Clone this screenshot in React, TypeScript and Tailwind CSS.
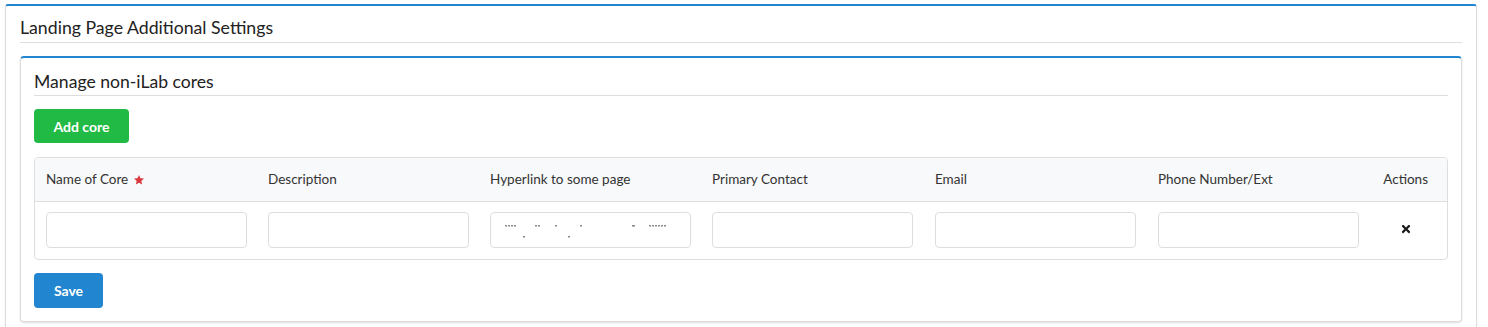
import { FaTimes } from "react-icons/fa";

const columns = [
  { label: "Name of Core", w: "w-[222px]" },
  { label: "Description", w: "w-[222px]" },
  { label: "Hyperlink to some page", w: "w-[222px]" },
  { label: "Primary Contact", w: "w-[223px]" },
  { label: "Email", w: "w-[223px]" },
  { label: "Phone Number/Ext", w: "w-[223px]" },
];

function Star() {
  return (
    <svg viewBox="0 0 24 24" className="ml-[5px] inline-block h-[12px] w-[12px] -translate-y-[1px] fill-[#d9363e]">
      <path d="M12 2l2.9 6.6 7.1.6-5.4 4.7 1.6 7.1L12 17.3 5.8 21l1.6-7.1L2 9.2l7.1-.6z" />
    </svg>
  );
}

// url in the field is scrolled so only a sliver of its letters shows
const sliverTop = [0, 3, 6, 9, 30, 33, 50, 75, 127, 128, 144, 147, 150, 153, 156, 159];
const sliverBottom = [18, 63];

function BlurredLink() {
  return (
    <div className="h-[36px] w-[201px] rounded-[4px] border border-[#dedede] bg-white">
      <svg width="199" height="34" className="block">
        {sliverTop.map((x) => (
          <rect key={x} x={14 + x} y={12} width={2} height={1.5} fill="#8a8a8a" />
        ))}
        {sliverBottom.map((x) => (
          <rect key={x} x={14 + x} y={23} width={2} height={1.5} fill="#8a8a8a" />
        ))}
      </svg>
    </div>
  );
}

export default function App() {
  return (
    <div className="min-h-[327px] w-full bg-white pt-[4px] pl-[5px] pr-[11px] font-['Lato','Liberation_Sans',sans-serif] text-[#333]">
      <div className="rounded-[3px] border border-t-2 border-[#dcdcdc] border-t-[#2185d0] px-[14px] pb-[20px] shadow-[0_1px_2px_rgba(34,36,38,0.1)]">
        <h2 className="border-b border-[#dedede] pt-[12px] pb-[4px] text-[17.7px] leading-[20px] font-normal text-[#222]">
          Landing Page Additional Settings
        </h2>

        <section className="mt-[13px] rounded-[4px] border border-t-2 border-[#dcdcdc] border-t-[#2185d0] px-[13px] pb-[13px] shadow-[0_1px_2px_rgba(34,36,38,0.15)]">
          <h3 className="border-b border-[#dedede] pt-[14px] pb-[3px] text-[17.6px] leading-[20px] font-normal text-[#222]">
            Manage non-iLab cores
          </h3>

          <button className="mt-[13px] h-[34px] w-[95px] rounded-[4px] bg-[#21ba45] text-[14px] font-bold text-white">
            Add core
          </button>

          <div className="mt-[14px] overflow-hidden rounded-[4px] border border-[#dedede]">
            <table className="w-full table-fixed border-collapse text-[13.5px] text-[#333]">
              <thead>
                <tr className="h-[43px] border-b border-[#dedede] bg-[#f8f9fa]">
                  {columns.map((c, i) => (
                    <th key={c.label} className={`${c.w} pl-[11px] text-left font-normal`}>
                      {c.label}
                      {i === 0 && <Star />}
                    </th>
                  ))}
                  <th className="pr-[19px] text-right font-normal">Actions</th>
                </tr>
              </thead>
              <tbody>
                <tr className="h-[58px]">
                  {columns.map((c, i) => (
                    <td key={c.label} className="pl-[11px] pb-[1px] align-middle">
                      {i === 2 ? (
                        <BlurredLink />
                      ) : (
                        <input className="block h-[36px] w-[201px] rounded-[4px] border border-[#dedede] bg-white px-[11px] outline-none" />
                      )}
                    </td>
                  ))}
                  <td className="pr-[35px] align-middle">
                    <FaTimes className="ml-auto block h-[12px] w-[12px] -translate-y-[1px] text-[#1b1c1d]" />
                  </td>
                </tr>
              </tbody>
            </table>
          </div>

          <button className="mt-[13px] h-[35px] w-[69px] rounded-[4px] bg-[#2185d0] text-[14px] font-bold text-white">
            Save
          </button>
        </section>
      </div>
    </div>
  );
}
